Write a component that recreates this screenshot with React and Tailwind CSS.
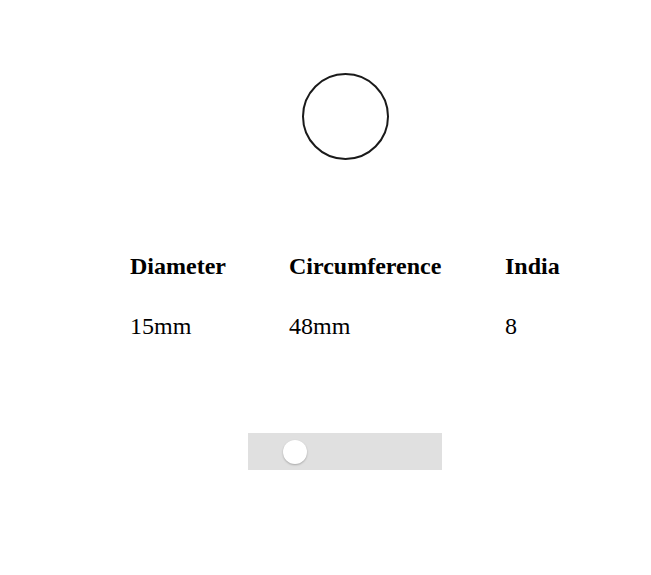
export default function App() {
  return (
    <div className="min-h-[575px] bg-white pl-[40px] flex flex-col items-center text-black" style={{ fontFamily: '"Liberation Serif", serif' }}>
      <div className="mt-[73px] w-[87px] h-[87px] rounded-full border-2 border-[#1a1a1a]" />
      <table className="mt-[76px] mr-[1px] w-[494px] table-fixed border-collapse">
        <thead>
          <tr>
            <th className="w-[159px] px-[32px] py-[16px] text-left text-[24px] font-bold leading-[28px] whitespace-nowrap">Diameter</th>
            <th className="w-[216px] px-[32px] py-[16px] text-left text-[24px] font-bold leading-[28px] whitespace-nowrap">Circumference</th>
            <th className="w-[119px] px-[32px] py-[16px] text-left text-[24px] font-bold leading-[28px] whitespace-nowrap">India</th>
          </tr>
        </thead>
        <tbody>
          <tr>
            <td className="px-[32px] py-[16px] text-[24px] leading-[28px]">15mm</td>
            <td className="px-[32px] py-[16px] text-[24px] leading-[28px]">48mm</td>
            <td className="px-[32px] py-[16px] text-[24px] leading-[28px]">8</td>
          </tr>
        </tbody>
      </table>
      <div className="mt-[77px] mr-[2px] w-[194px] h-[37px] bg-[#e0e0e0] flex items-center">
        <div className="ml-[35px] w-[24px] h-[24px] rounded-full bg-white shadow-[0_1px_2px_rgba(0,0,0,0.25)]" />
      </div>
    </div>
  );
}
